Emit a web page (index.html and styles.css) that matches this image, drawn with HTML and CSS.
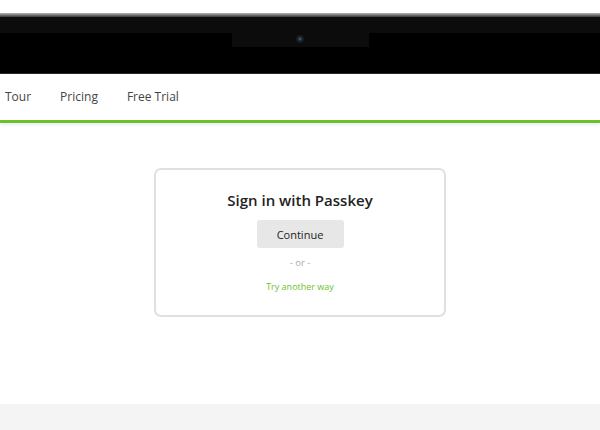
FILE: index.html
```html
<!DOCTYPE html>
<html lang="en">

<head>
    <meta charset="UTF-8">
    <title>Sign in with Passkey</title>
    <link rel="stylesheet" href="styles.css">
</head>

<body>
    <div id="page">
        <div id="bezel">
            <div class="rim"></div>
            <div class="strip"></div>
            <div class="notch"><span class="camera"></span></div>
        </div>
        <ul id="nav">
            <li>Tour</li>
            <li>Pricing</li>
            <li>Free Trial</li>
        </ul>
        <div id="main">
            <div class="card">
                <h2>Sign in with Passkey</h2>
                <button class="continue">Continue</button>
                <p class="or">- or -</p>
                <a class="another" href="#">Try another way</a>
            </div>
        </div>
        <div id="footer"></div>
    </div>
</body>

</html>
```

FILE: styles.css
```css
* {
    margin: 0;
    padding: 0;
    list-style: none;
    box-sizing: border-box;
}

body {
    font-family: "Open Sans", "Liberation Sans", sans-serif;
    background-color: #fff;
    overflow: hidden;
}

#page {
    display: flex;
    flex-direction: column;
    height: 430px;
}

#bezel {
    margin-top: 13px;
    height: 61px;
    background-color: #000;
    display: flex;
    flex-direction: column;
    align-items: center;
    border-bottom: 1px solid #2a2a2a;
}

#bezel .rim {
    align-self: stretch;
    height: 4px;
    background: linear-gradient(#b5b5b5, #6a6a6a 60%, #3a3a3a);
}

#bezel .strip {
    align-self: stretch;
    height: 16px;
    background-color: #0c0c0c;
}

#bezel .notch {
    width: 137px;
    height: 14px;
    background-color: #0c0c0c;
    display: flex;
    justify-content: center;
    padding-top: 2px;
}

.camera {
    display: block;
    width: 8px;
    height: 8px;
    border-radius: 50%;
    background: radial-gradient(circle, #4a6a8a 0, #1d2530 35%, #15181c 70%);
}

#nav {
    display: flex;
    height: 49px;
    padding: 0 0 0 5px;
    gap: 29px;
    align-items: center;
    border-bottom: 3px solid #6cc12a;
    box-shadow: 0 2px 3px rgba(0, 0, 0, 0.08);
    font-size: 12px;
    color: #444;
}

#nav li {
    padding-bottom: 1px;
}

#main {
    flex: 1;
    display: flex;
    justify-content: center;
    align-items: flex-start;
    padding-top: 45px;
}

.card {
    width: 292px;
    height: 149px;
    border: 2px solid #e0e0e0;
    border-radius: 7px;
    display: flex;
    flex-direction: column;
    align-items: center;
    padding-top: 20px;
}

.card h2 {
    font-size: 15px;
    font-weight: 600;
    color: #222;
    line-height: 21px;
}

.continue {
    margin-top: 9px;
    width: 87px;
    height: 28px;
    border: none;
    border-radius: 3px;
    background-color: #e7e7e7;
    font-family: "Open Sans", "Liberation Sans", sans-serif;
    font-size: 11px;
    color: #222;
}

.or {
    margin-top: 8px;
    font-size: 9.5px;
    color: #aaa;
    line-height: 14px;
}

.another {
    margin-top: 10px;
    font-size: 9px;
    color: #6cc12a;
    text-decoration: none;
    line-height: 14px;
}

#footer {
    height: 26px;
    background-color: #f3f4f3;
}
```
